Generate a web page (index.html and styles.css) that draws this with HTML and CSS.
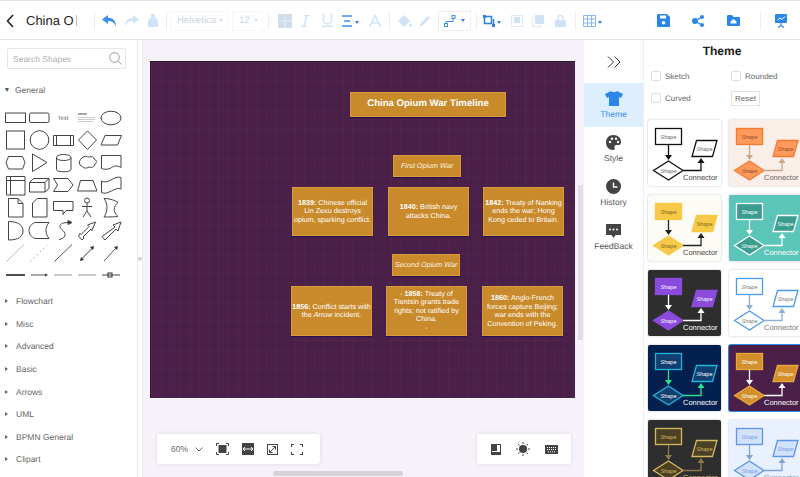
FILE: index.html
```html
<!DOCTYPE html>
<html>
<head>
    <title>China Opium War Timeline</title>
    <link rel="stylesheet" href="styles.css">
</head>
<body>
    <!-- shared drawing for the theme cards, colours come from the card class -->
    <svg class="defs" width="0" height="0">
        <symbol id="theme-sample" viewBox="0 0 73 66">
            <rect class="s-shape" x="7.500" y="8.500" width="26" height="16"/>
            <text class="s-label" x="20.500" y="18.500">Shape</text>
            <path class="s-arrow" d="M20.500 25V37"/>
            <path class="s-head" d="M17 35h7l-3.500 5z"/>
            <path class="s-shape" d="M20.500 41L35 50.500L20.500 60L5.500 50.500z"/>
            <text class="s-label" x="20.500" y="52.500">Shape</text>
            <path class="s-arrow" d="M35 50.500H53V41"/>
            <path class="s-head" d="M49.500 43h7L53 38z"/>
            <path class="s-shape" d="M48.500 20.500H69L64.500 36.500H44z"/>
            <text class="s-label" x="56.500" y="30.500">Shape</text>
            <text class="s-conn" x="35" y="59.500">Connector</text>
        </symbol>
    </svg>

    <header class="toolbar">
        <svg class="back" width="8" height="14" viewBox="0 0 8 14"><path d="M7 1L1.500 7L7 13" fill="none" stroke="#222" stroke-width="1.600"/></svg>
        <div class="doc-title">China O<span class="caret-line"></span></div>
        <span class="sep"></span>

        <span class="tool ml4"><svg width="15" height="12" viewBox="0 0 15 12"><path d="M6 0L0 4.500L6 9V6C10 6 12.500 7.500 14 11.500C14 6 11 2.800 6 2.800z" fill="#3b8ff0"/></svg></span>
        <span class="tool ml2"><svg width="15" height="12" viewBox="0 0 15 12"><path d="M9 0L15 4.500L9 9V6C5 6 2.500 7.500 1 11.500C1 6 4 2.800 9 2.800z" fill="#cfe2f7"/></svg></span>
        <span class="tool ml2"><svg width="12" height="13" viewBox="0 0 12 13"><path d="M4 0h4v4l3 2v7H1V6l3-2z" fill="#cfe2f7"/></svg></span>
        <span class="sep ml3"></span>

        <span class="select select-font ml3">Helvetica<i class="tri"></i></span>
        <span class="select select-size ml4">12<i class="tri"></i></span>
        <span class="sep ml5"></span>

        <span class="tool ml6"><svg width="14" height="14" viewBox="0 0 14 14"><path d="M0 0h14v14H0z" fill="#cfdcea"/><path d="M7 0v14M0 7h14" stroke="#e6edf5"/></svg></span>
        <span class="tool"><svg width="9" height="12" viewBox="0 0 9 12"><path d="M3 .5h6M0 11.500h6M5.800 .5L3 11.500" fill="none" stroke="#cfe2f7" stroke-width="1.500"/></svg></span>
        <span class="tool ml2"><svg width="11" height="13" viewBox="0 0 11 13"><path d="M1.500 0v6a4 4 0 0 0 8 0V0M0 12.300h11" fill="none" stroke="#cfe2f7" stroke-width="1.500"/></svg></span>
        <span class="tool tool-caret"><svg width="12" height="12" viewBox="0 0 12 12"><path d="M1 1h10M3 6h6M1 11h10" fill="none" stroke="#3b8ff0" stroke-width="1.600"/></svg><i class="tri tri-blue"></i></span>
        <span class="tool ml4"><svg width="12" height="12" viewBox="0 0 12 12"><path d="M.5 12L6 .5L11.500 12M2.500 8h7" fill="none" stroke="#cfe2f7" stroke-width="1.500"/></svg></span>
        <span class="sep ml4"></span>

        <span class="tool ml5"><svg width="14" height="12" viewBox="0 0 14 12"><path d="M6 0L12 6L6 12L0 6z" fill="#cfe2f7"/><path d="M12.500 8c1 1.500 1.300 2 1.300 2.600a1.200 1.200 0 0 1-2.500 0c0-.6.200-1.100 1.200-2.600z" fill="#cfe2f7"/></svg></span>
        <span class="tool"><svg width="12" height="12" viewBox="0 0 12 12"><path d="M0 12L2 8L9 1L11 3L4 10z" fill="#cfe2f7"/></svg></span>
        <span class="connector-box ml3">
            <svg width="12" height="12" viewBox="0 0 12 12"><path d="M2 10V6.500H9V2" fill="none" stroke="#3b8ff0"/><rect x=".5" y="8.500" width="3" height="3" fill="#fff" stroke="#3b8ff0"/><rect x="8" y=".5" width="3" height="3" fill="#fff" stroke="#3b8ff0"/></svg>
            <i class="tri tri-dark"></i>
        </span>
        <span class="sep ml5"></span>

        <span class="tool tool-caret ml2"><svg width="12" height="12" viewBox="0 0 12 12"><rect x="1.500" y="1.500" width="7" height="7" fill="none" stroke="#2a7fe0" stroke-width="1.500"/><rect x="0" y="0" width="3" height="3" fill="#2a7fe0"/><rect x="9" y="9" width="3" height="3" fill="#2a7fe0"/><path d="M10.500 4v5" stroke="#2a7fe0" stroke-width="1.500"/></svg><i class="tri tri-blue"></i></span>
        <span class="tool ml4"><svg width="12" height="12" viewBox="0 0 12 12"><rect x=".5" y=".5" width="11" height="11" fill="none" stroke="#dceaf8"/><rect x="3" y="2" width="6" height="6" fill="#cfe2f7"/></svg></span>
        <span class="tool ml1"><svg width="12" height="12" viewBox="0 0 12 12"><rect x="3" y="0" width="9" height="9" fill="#cfe2f7"/><path d="M2 3H.5v8.500H9V10" fill="none" stroke="#dceaf8"/></svg></span>
        <span class="tool ml2"><svg width="11" height="12" viewBox="0 0 11 12"><rect y="5" width="11" height="7" rx="1" fill="#cfe2f7"/><path d="M3 5V3a2.500 2.500 0 0 1 5 0v2" fill="none" stroke="#cfe2f7" stroke-width="1.400"/></svg></span>
        <span class="sep ml5"></span>

        <span class="tool tool-caret ml3"><svg width="13" height="12" viewBox="0 0 13 12"><path d="M.5 .5h12v11H.5zM.5 4h12M.5 8h12M4.500 .5v11M8.500 .5v11" fill="none" stroke="#8ab8f0"/></svg><i class="tri tri-blue"></i></span>

        <div class="toolbar-right">
            <span class="tool"><svg width="13" height="13" viewBox="0 0 13 13"><path d="M1 0h9l3 3v9a1 1 0 0 1-1 1H1a1 1 0 0 1-1-1V1a1 1 0 0 1 1-1z" fill="#2a87ea"/><rect x="3" y="1.500" width="6" height="3" fill="#fff"/><circle cx="6.500" cy="8.800" r="1.800" fill="#fff"/></svg></span>
            <span class="tool ml15"><svg width="12" height="12" viewBox="0 0 12 12"><path d="M2.500 6L10 2M2.500 6L10 10" stroke="#2a87ea" stroke-width="1.300"/><circle cx="3" cy="6" r="3" fill="#2a87ea"/><circle cx="10" cy="2" r="2" fill="#2a87ea"/><circle cx="10" cy="10" r="2" fill="#2a87ea"/></svg></span>
            <span class="tool ml15"><svg width="13" height="11" viewBox="0 0 13 11"><path d="M0 1a1 1 0 0 1 1-1h4l1.500 2H12a1 1 0 0 1 1 1v7a1 1 0 0 1-1 1H1a1 1 0 0 1-1-1z" fill="#2a87ea"/><path d="M3.500 6.500L6.500 4L9.500 6.500V8.500H3.500z" fill="#fff"/></svg></span>
            <span class="sep ml17"></span>
            <span class="tool ml10"><svg width="12" height="14" viewBox="0 0 12 14"><rect width="12" height="9" rx="1" fill="#2a87ea"/><path d="M2.500 6L5 4L7 5.500L10 2.500" fill="none" stroke="#fff"/><path d="M6 9v2.500M3 13.500L6 11.500L9 13.500" fill="none" stroke="#2a87ea" stroke-width="1.200"/></svg></span>
        </div>
    </header>

    <div class="main">
        <!-- Shapes Panel -->
        <aside class="shapes">
            <div class="search">
                <span>Search Shapes</span>
                <svg width="13" height="13" viewBox="0 0 13 13"><circle cx="5.500" cy="5.500" r="4.800" fill="none" stroke="#999"/><path d="M9 9L12.500 12.500" stroke="#999"/></svg>
            </div>
            <div class="group group-open"><i class="tri-down"></i>General</div>
            <svg class="palette" width="137" height="182" viewBox="0 105 137 182" fill="none" stroke="#444">
                <rect x="5.500" y="113" width="20" height="9.500"/>
                <rect x="29.500" y="113" width="19.500" height="9.500" rx="1.500"/>
                <text x="57.500" y="120" class="palette-text" stroke="none">Text</text>
                <path d="M78 114h9" stroke="#555"/><path d="M78 117.500h17M78 119.500h17M78 121.500h15" stroke="#ccc"/>
                <ellipse cx="111" cy="118" rx="10" ry="6.800"/>

                <rect x="6.500" y="131" width="18" height="18"/>
                <circle cx="39.500" cy="140" r="9.300"/>
                <path d="M53.500 135.500h20v10h-20zM56.500 135.500v10M70.500 135.500v10"/>
                <path d="M87.500 131L96.500 140L87.500 149.500L78.500 140z"/>
                <path d="M105 135.500h16.500L117.500 145H101z"/>

                <path d="M8.500 156.500H22.500L25 162.500L22.500 169H8.500L6 162.500z"/>
                <path d="M32.500 154L47 162.500L32.500 171.500z"/>
                <path d="M56.500 157.500v12c0 3 14.500 3 14.500 0v-12M56.500 157.500c0-4 14.500-4 14.500 0s-14.500 4-14.500 0z"/>
                <path d="M82 158c3-3 5-1 7-1c3-1 5 0 5 2c3 1 3 4 1 5c0 3-4 4-6 3c-3 2-6 1-7-1c-3 0-4-5 0-8z"/>
                <path d="M101.500 155.500h19.500v12c-5-3-8-1-11 1c-3 1-6 1-8.500 0z"/>

                <path d="M6.500 176.500h18.500v18.500H6.500zM10.500 176.500V195M6.500 180.500H25"/>
                <path d="M29.500 182.500l4-4H49v10l-4 3.500H29.500zM29.500 182.500H45V192M45 182.500l4-4"/>
                <path d="M53.500 178.500H68L73 185L68 191.500H53.500L57.500 185z"/>
                <path d="M80.500 180.500H93L97 191H77.500z"/>
                <path d="M101.500 181c6 4 13-6 19.500-3.500V189c-6-3-13 7-19.500 3.500z"/>

                <path d="M8.500 198.500H18L23 203.500V217H8.500zM18 198.500V203.500H23"/>
                <path d="M37 198.500H47V217H32.500V203z"/>
                <path d="M53.500 201.500H73V210.500H66L63 214.500V210.500H53.500z"/>
                <circle cx="87" cy="200.500" r="2.500"/><path d="M87 203v8M82 206.500h10M87 211L83 217M87 211L91 217"/>
                <path d="M104 198.500c9 0 14 4 14 4c-5 4-5 10 0 14c0 0-5 0.500-14 0.500c4-6 4-13 0-18.500z"/>

                <path d="M8.500 221.500c10 0 14.500 4 14.500 9.500s-4.500 9-14.500 9z"/>
                <path d="M35 222.500H49c-4 5-4 11 0 16H35c-8-3-8-13 0-16z"/>
                <path d="M69 222.500c-12 0-10 5-6 8c4 4 2 8-4 9"/><path d="M68 220.500l4 2l-4 2z" fill="#333"/>
                <path d="M78.500 236l3.500 4l2-2l-1-1l8-8l1 1.500l3.500-8.500l-8 3l1.500 1.500l-8 8l-1-1z"/>
                <path d="M102 236.500l3 3.500l11-11l2 2l3-9l-8 3l2 2z"/>

                <path d="M6.500 261.500L24 244.500" stroke="#bbb"/>
                <path d="M30.500 261.500L47 245" stroke="#999" stroke-dasharray="1.500 3"/>
                <path d="M54.500 261.500L72 244.500" stroke="#555"/>
                <path d="M81 259.500L93 247.500" stroke="#333"/><path d="M80 261l1-4l3 3zM94 246l-1 4l-3-3z" fill="#333" stroke="none"/>
                <path d="M104 261L116 248" stroke="#555"/><path d="M118 246l-1 4l-3-3z" fill="#333" stroke="none"/>

                <path d="M6 275h19" stroke="#222" stroke-width="1.600"/>
                <path d="M31 275h15" stroke="#555"/><path d="M48 275l-3-1.500v3z" fill="#333" stroke="none"/>
                <path d="M54 275h18" stroke="#aaa" stroke-width="1.300"/>
                <path d="M78 275h18" stroke="#aaa" stroke-width="1.300"/>
                <path d="M102 275h18" stroke="#444"/><rect x="108" y="273" width="4" height="4" stroke="#333"/>
            </svg>
            <ul class="group-list">
                <li><i class="tri-right"></i>Flowchart</li>
                <li><i class="tri-right"></i>Misc</li>
                <li><i class="tri-right"></i>Advanced</li>
                <li><i class="tri-right"></i>Basic</li>
                <li><i class="tri-right"></i>Arrows</li>
                <li><i class="tri-right"></i>UML</li>
                <li><i class="tri-right"></i>BPMN General</li>
                <li><i class="tri-right"></i>Clipart</li>
            </ul>
        </aside>

        <div class="gutter"><span class="gutter-handle">«</span></div>

        <!-- Drawing Area -->
        <section class="stage">
            <div class="canvas">
                <div class="node node-title">China Opium War Timeline</div>

                <div class="node node-head node-first"><em>First Opium War</em></div>
                <div class="node node-card n1"><span><b>1839:</b> Chinese official<br>Lin Zexu destroys<br>opium, sparking conflict.</span></div>
                <div class="node node-card n2"><span><b>1840:</b> British navy<br>attacks China.</span></div>
                <div class="node node-card n3"><span><b>1842:</b> Treaty of Nanking<br>ends the war; Hong<br>Kong ceded to Britain.</span></div>

                <div class="node node-head node-second"><em>Second Opium War</em></div>
                <div class="node node-card n4"><span><b>1856:</b> Conflict starts with<br>the <em>Arrow</em> incident.</span></div>
                <div class="node node-card n5"><span>- <b>1858:</b> Treaty of<br>Tientsin grants trade<br>rights; not ratified by<br>China.<br>-</span></div>
                <div class="node node-card n6"><span><b>1860:</b> Anglo-French<br>forces capture Beijing;<br>war ends with the<br>Convention of Peking.</span></div>
            </div>

            <div class="float-bar zoom-bar">
                <span class="zoom-value">60%</span>
                <svg class="zoom-chevron" width="8" height="5" viewBox="0 0 8 5"><path d="M.5 .5L4 4L7.500 .5" fill="none" stroke="#666"/></svg>
                <svg width="13" height="12" viewBox="0 0 13 12" fill="none" stroke="#444"><rect x="3" y="2.500" width="7" height="7" fill="#444"/><path d="M.5 3V.5H3M10 .5h2.500V3M.5 9v2.500H3M10 11.500h2.500V9"/></svg>
                <svg width="12" height="12" viewBox="0 0 12 12"><rect width="12" height="12" fill="#444"/><path d="M1 6h10M3 4L1 6L3 8M9 4L11 6L9 8" fill="none" stroke="#fff"/></svg>
                <svg width="11" height="11" viewBox="0 0 11 11" fill="none" stroke="#444"><rect x=".5" y=".5" width="10" height="10"/><path d="M2.500 8.500L8.500 2.500M5.500 2.500h3v3M2.500 5.500v3h3"/></svg>
                <svg width="12" height="11" viewBox="0 0 12 11" fill="none" stroke="#444" stroke-width="1.200"><path d="M.5 3V.5H3M9 .5h2.500V3M.5 8v2.500H3M9 10.500h2.500V8"/></svg>
            </div>

            <div class="float-bar view-bar">
                <svg width="10" height="11" viewBox="0 0 10 11"><rect x=".5" y=".5" width="9" height="10" fill="#fff" stroke="#444"/><path d="M0 0h6v7H0zM0 8h10v3H0z" fill="#444"/></svg>
                <svg width="14" height="14" viewBox="0 0 14 14"><circle cx="7" cy="7" r="4" fill="#444"/><path d="M7 0v2M7 12v2M0 7h2M12 7h2M2 2l1.500 1.500M10.500 10.500L12 12M2 12l1.500-1.500M10.500 3.500L12 2" stroke="#444"/></svg>
                <svg width="13" height="9" viewBox="0 0 13 9"><rect width="13" height="9" fill="#444"/><path d="M2 2.500h9M2 4.500h9M3 6.800h7" stroke="#fff" stroke-dasharray="1 1"/></svg>
            </div>

            <div class="scroll-v"></div>
            <div class="scroll-h"></div>
        </section>

        <!-- Side Tabs -->
        <nav class="rail">
            <div class="rail-top">
                <svg width="14" height="12" viewBox="0 0 14 12"><path d="M1 .5L6.500 6L1 11.500M7.500 .5L13 6L7.500 11.500" fill="none" stroke="#333"/></svg>
            </div>
            <div class="rail-item active">
                <svg width="18" height="15" viewBox="0 0 18 15"><path d="M6 0C7 1.500 11 1.500 12 0L18 3L16 7L14 6V15H4V6L2 7L0 3z" fill="#2a87ea"/></svg>
                <span>Theme</span>
            </div>
            <div class="rail-item">
                <svg width="15" height="15" viewBox="0 0 15 15"><path d="M7.500 0C3 0 0 3 0 7.500S3 15 7 15c2 0 2-1.500 1.500-2.500C8 11 9 10 10.500 10H13c1.500 0 2-1.500 2-3C15 3 12 0 7.500 0z" fill="#444"/><circle cx="4" cy="7" r="1.200" fill="#fff"/><circle cx="6" cy="3.800" r="1.200" fill="#fff"/><circle cx="10" cy="3.800" r="1.200" fill="#fff"/><circle cx="12" cy="7" r="1.200" fill="#fff"/></svg>
                <span>Style</span>
            </div>
            <div class="rail-item">
                <svg width="15" height="15" viewBox="0 0 15 15"><circle cx="7.500" cy="7.500" r="7.500" fill="#444"/><path d="M7.500 3.500V8H11.500" fill="none" stroke="#fff" stroke-width="1.400"/></svg>
                <span>History</span>
            </div>
            <div class="rail-item">
                <svg width="15" height="14" viewBox="0 0 15 14"><path d="M0 0h15v11H9.500L7.500 14L5.500 11H0z" fill="#444"/><circle cx="4" cy="5.500" r="1" fill="#fff"/><circle cx="7.500" cy="5.500" r="1" fill="#fff"/><circle cx="11" cy="5.500" r="1" fill="#fff"/></svg>
                <span>FeedBack</span>
            </div>
        </nav>

        <!-- Theme Panel -->
        <aside class="themes">
            <h2 class="themes-title">Theme</h2>
            <div class="theme-options">
                <label class="check"><i></i>Sketch</label>
                <label class="check"><i></i>Rounded</label>
                <label class="check"><i></i>Curved</label>
                <button class="reset">Reset</button>
            </div>
            <div class="theme-grid">
                <svg class="theme-card t-white"><use href="#theme-sample"/></svg>
                <svg class="theme-card t-orange"><use href="#theme-sample"/></svg>
                <svg class="theme-card t-yellow"><use href="#theme-sample"/></svg>
                <svg class="theme-card t-teal"><use href="#theme-sample"/></svg>
                <svg class="theme-card t-violet"><use href="#theme-sample"/></svg>
                <svg class="theme-card t-outline"><use href="#theme-sample"/></svg>
                <svg class="theme-card t-navy"><use href="#theme-sample"/></svg>
                <svg class="theme-card t-plum selected"><use href="#theme-sample"/></svg>
                <svg class="theme-card t-gold"><use href="#theme-sample"/></svg>
                <svg class="theme-card t-sky"><use href="#theme-sample"/></svg>
            </div>
        </aside>
    </div>
</body>
</html>
```

FILE: styles.css
```css
* {
    box-sizing: border-box;
}

html, body {
    height: 100%;
}

body {
    margin: 0;
    overflow: hidden;
    display: flex;
    flex-direction: column;
    background: #fff;
    color: #555;
    font-family: "Liberation Sans", Arial, sans-serif;
    font-size: 8.500px;
    text-rendering: geometricPrecision;
}

.defs {
    position: absolute;
}

/* Toolbar */
.toolbar {
    height: 40px;
    flex: none;
    display: flex;
    align-items: center;
    padding: 1px 0 0 6px;
    border-top: 1px solid #e2e2e2;
    border-bottom: 1px solid #e4e4e8;
}

.back {
    flex: none;
}

.doc-title {
    width: 68px;
    margin-left: 12px;
    color: #222;
    font-size: 13px;
    white-space: nowrap;
    display: flex;
    align-items: center;
}

.caret-line {
    width: 1px;
    height: 11px;
    margin-left: 2px;
    background: #bbb;
}

.sep {
    flex: none;
    width: 1px;
    height: 18px;
    background: #eceef2;
}

.tool {
    flex: none;
    width: 20px;
    height: 20px;
    display: flex;
    align-items: center;
    justify-content: center;
}

.tool-caret {
    width: 24px;
    justify-content: flex-start;
    padding-left: 4px;
    gap: 2px;
}

.ml1 { margin-left: 1px; }
.ml2 { margin-left: 2px; }
.ml3 { margin-left: 3px; }
.ml4 { margin-left: 4px; }
.ml5 { margin-left: 5px; }
.ml6 { margin-left: 6px; }
.ml10 { margin-left: 10px; }
.ml15 { margin-left: 15px; }
.ml17 { margin-left: 17px; }

.select {
    flex: none;
    height: 20px;
    display: flex;
    align-items: center;
    justify-content: space-between;
    padding: 0 4px 0 6px;
    border: 1px solid #f6f7f9;
    color: #ccd3dc;
    font-size: 9.500px;
}

.select-font {
    width: 58px;
}

.select-size {
    width: 31px;
}

.tri {
    width: 0;
    height: 0;
    border: 2px solid transparent;
    border-top: 3px solid #d5dbe3;
    border-bottom: 0;
}

.tri-blue {
    border-top-color: #2a7fe0;
    margin-top: 3px;
}

.tri-dark {
    border-top-color: #2a7fe0;
}

.connector-box {
    flex: none;
    width: 33px;
    height: 20px;
    display: flex;
    align-items: center;
    gap: 5px;
    padding-left: 5px;
    border: 1px solid #eceef2;
}

.toolbar-right {
    margin-left: auto;
    padding-right: 9px;
    display: flex;
    align-items: center;
}

.main {
    flex: 1;
    display: flex;
    min-height: 0;
}

/* Shapes */
.shapes {
    width: 137px;
    flex: none;
    padding-top: 8px;
    overflow: hidden;
}

.search {
    width: 119px;
    height: 21px;
    margin-left: 7px;
    padding: 0 3px 0 5px;
    display: flex;
    align-items: center;
    justify-content: space-between;
    border: 1px solid #e6e6e6;
    border-radius: 2px;
    color: #b0b0b0;
}

.group {
    margin-top: 16px;
    padding-left: 5px;
    display: flex;
    align-items: center;
    color: #666;
}

.tri-down {
    width: 0;
    height: 0;
    margin-right: 6px;
    border: 2.500px solid transparent;
    border-top: 4px solid #555;
    border-bottom: 0;
}

.palette {
    display: block;
    margin-top: 10px;
}

.palette-text {
    fill: #666;
    font-size: 6px;
}

.group-list {
    list-style: none;
    margin: 3px 0 0;
    padding: 0 0 0 5px;
}

.group-list li {
    height: 22.600px;
    display: flex;
    align-items: center;
    color: #666;
}

.tri-right {
    width: 0;
    height: 0;
    margin-right: 8px;
    border: 2px solid transparent;
    border-left: 3.500px solid #666;
    border-right: 0;
}

.gutter {
    width: 6px;
    flex: none;
    display: flex;
    align-items: center;
    justify-content: center;
    border-left: 1px solid #e8e8ea;
    border-right: 1px solid #ececf0;
    background: #fcfbfd;
}

.gutter-handle {
    color: #aaa;
    font-size: 8px;
}

/* Stage */
.stage {
    position: relative;
    width: 441px;
    flex: none;
    padding: 21px 0 0 7px;
    background: #f7f2f9;
    overflow: hidden;
}

.canvas {
    position: relative;
    width: 425px;
    height: 337px;
    background-color: #4a2049;
    background-image:
        linear-gradient(rgba(255, 255, 255, 0.025) 1px, transparent 1px),
        linear-gradient(90deg, rgba(255, 255, 255, 0.025) 1px, transparent 1px);
    background-size: 9.600px 9.600px;
    border-top: 1px solid #1e1a20;
    border-left: 1px solid #2c1a2c;
}

.node {
    position: absolute;
    display: flex;
    align-items: center;
    justify-content: center;
    text-align: center;
    background: #c98a2b;
    border: 1px solid #d89c3c;
    box-shadow: 0 1px 1px #2a0f52;
    color: #fff;
    font-size: 7.200px;
    line-height: 8.500px;
    white-space: nowrap;
}

.node-title {
    left: 199px;
    top: 30px;
    width: 156px;
    height: 25px;
    font-size: 9.600px;
    font-weight: bold;
}

.node-head {
    height: 22px;
    color: #fbf3e2;
}

.node-first {
    left: 242px;
    top: 93px;
    width: 68px;
}

.node-second {
    left: 241px;
    top: 192px;
    width: 68px;
}

.node-card {
    width: 81px;
    height: 49px;
}

.n1 { left: 141px; top: 125px; }
.n2 { left: 237px; top: 125px; }
.n3 { left: 332px; top: 125px; }
.n4 { left: 140px; top: 224px; height: 50px; }
.n5 { left: 235px; top: 224px; height: 50px; }
.n6 { left: 331px; top: 224px; height: 50px; }

.float-bar {
    position: absolute;
    top: 394px;
    height: 30px;
    display: flex;
    align-items: center;
    background: #fff;
    border-radius: 3px;
    box-shadow: 0 0 4px rgba(120, 100, 130, 0.18);
}

.zoom-bar {
    left: 14px;
    width: 163px;
    padding-left: 14px;
    gap: 13px;
}

.zoom-value {
    width: 18px;
    color: #666;
}

.zoom-chevron {
    margin-left: -7px;
}

.view-bar {
    left: 334px;
    width: 94px;
    padding-left: 14px;
    gap: 15px;
}

.scroll-v {
    position: absolute;
    right: 1px;
    top: 145px;
    width: 5px;
    height: 155px;
    background: #e2dde4;
}

.scroll-h {
    position: absolute;
    left: 130px;
    bottom: 1px;
    width: 130px;
    height: 5px;
    border-radius: 3px;
    background: #d6d2d8;
}

/* Side tabs */
.rail {
    width: 59px;
    flex: none;
    color: #555;
}

.rail-top {
    height: 43px;
    display: flex;
    align-items: center;
    justify-content: center;
}

.rail-item {
    height: 44px;
    display: flex;
    flex-direction: column;
    align-items: center;
    justify-content: center;
    gap: 3px;
}

.rail-item.active {
    background: #ddeefe;
    color: #3b8ff0;
}

/* Theme panel */
.themes {
    flex: 1;
    min-width: 0;
    overflow: hidden;
    position: relative;
    border-left: 1px solid #eeeef0;
}

.themes-title {
    margin: 4px 0 0;
    height: 15px;
    color: #222;
    font-size: 12px;
    line-height: 15px;
    text-align: center;
}

.theme-options {
    display: grid;
    grid-template-columns: 80px 70px;
    grid-auto-rows: 22px;
    align-items: center;
    margin: 6px 0 0 7px;
    font-size: 8px;
}

.check {
    display: flex;
    align-items: center;
    gap: 4px;
    color: #666;
}

.check i {
    width: 10px;
    height: 10px;
    border: 1px solid #ddd;
    border-radius: 2px;
}

.reset {
    width: 29px;
    height: 15px;
    padding: 0;
    border: 1px solid #e2e2e2;
    background: #fff;
    color: #666;
    font-family: inherit;
    font-size: 8px;
}

.theme-grid {
    display: grid;
    grid-template-columns: 73px 73px;
    grid-auto-rows: 66px;
    gap: 9px 8px;
    margin: 11px 0 0 4px;
    width: 160px;
}

.theme-card {
    width: 73px;
    height: 66px;
    display: block;
    background: var(--bg);
    border-radius: 2px;
    box-shadow: 0 0 2px rgba(0, 0, 0, 0.3);
}

.s-shape {
    fill: var(--fill);
    stroke: var(--line);
    stroke-width: 1.300px;
}

.s-arrow {
    fill: none;
    stroke: var(--arrow);
    stroke-width: 1.300px;
}

.s-head {
    fill: var(--arrow);
}

.s-label {
    fill: var(--label);
    font-size: 5.500px;
    text-anchor: middle;
}

.s-conn {
    fill: var(--conn);
    font-size: 7.500px;
}

.t-white { --bg: #fff; --fill: #fff; --line: #111; --arrow: #111; --label: #666; --conn: #444; }
.t-orange { --bg: #faeee8; --fill: #ff9a5c; --line: #f37a2e; --arrow: #c9a58c; --label: #8a4a20; --conn: #666; }
.t-yellow { --bg: #fdfbf6; --fill: #f7c948; --line: #f7c948; --arrow: #222; --label: #7a6420; --conn: #444; }
.t-teal { --bg: #5cc5b9; --fill: #3b9d8f; --line: #fff; --arrow: #fff; --label: #fff; --conn: #fff; }
.t-violet { --bg: #2e2e2e; --fill: #8a4bdc; --line: #8a4bdc; --arrow: #fff; --label: #fff; --conn: #fff; }
.t-outline { --bg: #fff; --fill: #fff; --line: #4a9bec; --arrow: #8bb0d0; --label: #777; --conn: #777; }
.t-navy { --bg: #04204f; --fill: #123e70; --line: #21b6d8; --arrow: #2fe08a; --label: #fff; --conn: #fff; }
.t-plum { --bg: #4a2049; --fill: #d28f2b; --line: #e8a63a; --arrow: #fff; --label: #fff; --conn: #fff; }
.t-gold { --bg: #2e2e2e; --fill: #4a4025; --line: #d4b860; --arrow: #8c7a45; --label: #d9b95c; --conn: #d9b95c; }
.t-sky { --bg: #e8f1fd; --fill: #d3e2fb; --line: #5f94ea; --arrow: #7fa3cc; --label: #6f9be8; --conn: #7f9bc0; }

.theme-card.selected {
    box-shadow: 0 0 0 1px #2a87ea;
}
```
